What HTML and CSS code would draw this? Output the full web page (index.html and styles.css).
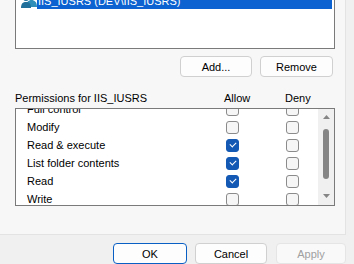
FILE: index.html
```html
<!DOCTYPE html>
<html lang="en">
<head>
    <meta charset="UTF-8">
    <title>Security</title>
    <link rel="stylesheet" href="styles.css">
</head>
<body>
    <div class="page">
        <div class="users">
            <div class="user-row">
                <svg class="user-icon" width="16" height="16" viewBox="0 0 16 16">
                    <circle cx="10.5" cy="4" r="3" fill="#2f8fb8"/>
                    <path d="M5 15 C5 10 7.5 8 10.5 8 C13.5 8 16 10 16 15 Z" fill="#2f8fb8"/>
                    <circle cx="5" cy="6" r="3" fill="#1f6f9a"/>
                    <path d="M0 16 C0 11.5 2 10 5 10 C8 10 10 11.5 10 16 Z" fill="#1f6f9a"/>
                </svg>
                <span class="sel">IIS_IUSRS (DEV\IIS_IUSRS)</span>
            </div>
        </div>

        <div class="actions">
            <button class="btn btn-add">Add...</button>
            <button class="btn btn-remove">Remove</button>
        </div>

        <div class="perm-head">
            <span>Permissions for IIS_IUSRS</span>
            <span>Allow</span>
            <span>Deny</span>
        </div>

        <div class="perms">
            <div class="rows">
                <div class="row"><span>Full control</span><i class="cb"></i><i class="cb"></i></div>
                <div class="row"><span>Modify</span><i class="cb"></i><i class="cb"></i></div>
                <div class="row"><span>Read &amp; execute</span><i class="cb on"></i><i class="cb"></i></div>
                <div class="row"><span>List folder contents</span><i class="cb on"></i><i class="cb"></i></div>
                <div class="row"><span>Read</span><i class="cb on"></i><i class="cb"></i></div>
                <div class="row"><span>Write</span><i class="cb"></i><i class="cb"></i></div>
            </div>
            <div class="scrollbar">
                <svg class="arrow up" width="7" height="4" viewBox="0 0 7 4"><path d="M0 4 L3.5 0 L7 4 Z" fill="#858585"/></svg>
                <div class="thumb"></div>
                <svg class="arrow down" width="7" height="4" viewBox="0 0 7 4"><path d="M0 0 L7 0 L3.5 4 Z" fill="#858585"/></svg>
            </div>
        </div>
    </div>

    <div class="footer">
        <button class="btn btn-ok">OK</button>
        <button class="btn btn-cancel">Cancel</button>
        <button class="btn btn-apply" disabled>Apply</button>
    </div>
</body>
</html>
```

FILE: styles.css
```css
body { margin: 0; width: 354px; height: 264px; overflow: hidden; background-color: #f0f0f0; font-family: "Liberation Sans", Arial, sans-serif; font-size: 11px; color: #000; }
.page { width: 346px; height: 235px; box-sizing: border-box; padding-left: 15px; background-color: #f7f7f7; border-right: 1px solid #e3e3e3; border-bottom: 1px solid #e3e3e3; overflow: hidden; }

.users { width: 320px; height: 61px; margin-top: -12px; box-sizing: border-box; border: 1px solid #7a7a7a; background-color: #fff; padding-top: 2px; }
.user-row { display: flex; align-items: center; height: 18px; padding-left: 5px; }
.user-icon { flex: none; }
.sel { flex: 1; height: 18px; box-sizing: border-box; padding-top: 3px; line-height: 15px; margin-right: 2px; padding-left: 1px; background-color: #0b62d0; color: #fff; }

.actions { display: flex; justify-content: flex-end; gap: 8px; width: 318px; margin-top: 7px; }
.btn { height: 21px; padding: 0; box-sizing: border-box; border: 1px solid #d0d0d0; border-radius: 4px; background-color: #fdfdfd; font-family: inherit; font-size: 11px; color: #000; }
.btn-add { width: 72px; }
.btn-remove { width: 73px; }

.perm-head { display: grid; grid-template-columns: 209px 61px 1fr; align-items: end; height: 31px; padding-bottom: 2px; box-sizing: border-box; line-height: 16px; }

.perms { display: flex; width: 320px; height: 98px; box-sizing: border-box; border: 1px solid #7a7a7a; background-color: #fff; overflow: hidden; }
.rows { flex: 1; margin-top: -9px; }
.row { display: grid; grid-template-columns: 210px 60px 1fr; align-items: center; height: 18px; }
.row span { padding-left: 11px; }
.cb { display: block; width: 13px; height: 13px; box-sizing: border-box; border: 1px solid #8b8b8b; border-radius: 3px; background-color: #f6f6f6; position: relative; }
.cb.on { border-color: #1459b4; background-color: #1459b4; }
.cb.on::after { content: ""; position: absolute; left: 3px; top: 2px; width: 5px; height: 3px; border-left: 1px solid #fff; border-bottom: 1px solid #fff; transform: rotate(-45deg); }

.scrollbar { display: flex; flex-direction: column; align-items: center; width: 16px; background-color: #f0f0f0; }
.arrow.up { margin-top: 6px; }
.thumb { width: 6px; height: 50px; margin-top: 10px; border-radius: 3px; background-color: #858585; }
.arrow.down { margin-top: 15px; }

.footer { display: flex; justify-content: flex-end; gap: 8px; padding-right: 8px; margin-top: 8px; }
.btn-ok { width: 74px; border-color: #0a5fc4; }
.btn-cancel { width: 72px; margin-right: 1px; }
.btn-apply { width: 70px; color: #a0a0a0; border-color: #e5e5e5; background-color: #f9f9f9; }
```
